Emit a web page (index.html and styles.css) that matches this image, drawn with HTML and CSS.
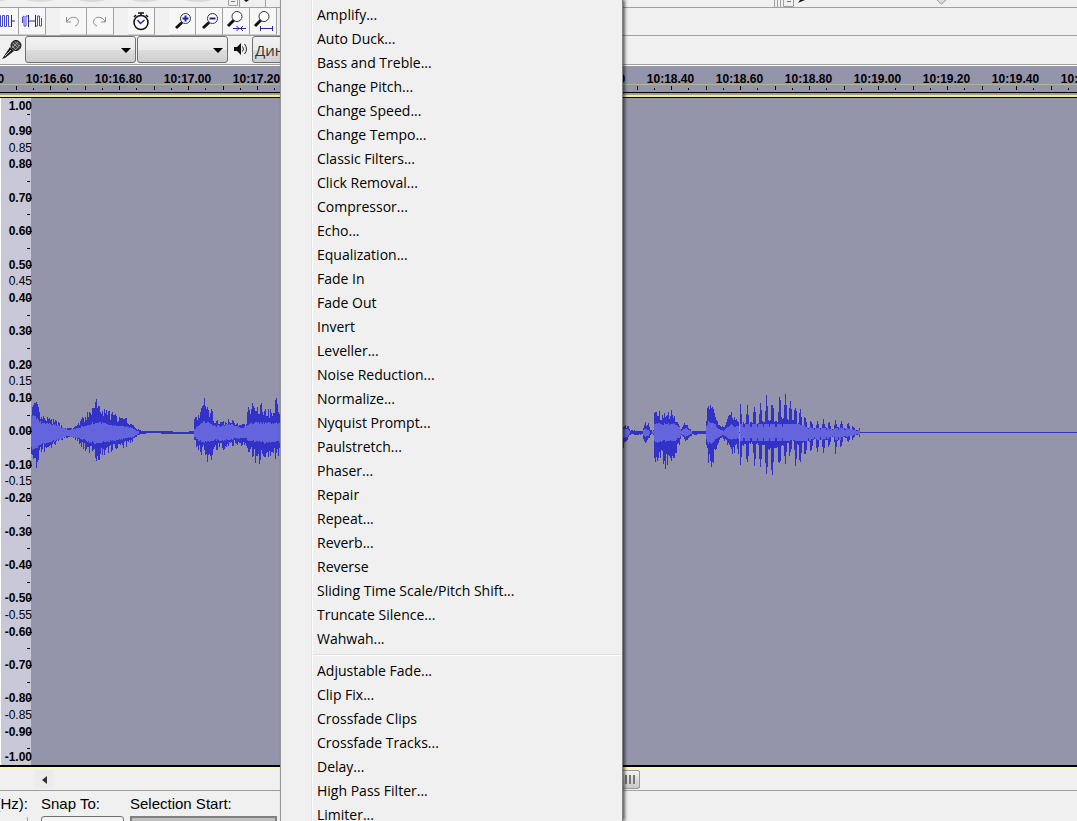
FILE: index.html
```
<!DOCTYPE html>
<html lang="en">
<head>
  <meta charset="UTF-8">
  <meta name="viewport" content="width=device-width, initial-scale=1.0">
  <title>Audacity</title>
  <link rel="stylesheet" href="styles.css">
</head>
<body>
  <div class="app">
    <!-- Transport buttons, mostly scrolled off the top -->
    <div class="toolbar transport">
      <svg class="transport-art" width="1077" height="7" aria-hidden="true">
        <g class="round-shadow">
          <ellipse cx="-8" cy="-5" rx="18" ry="6"/>
          <ellipse cx="40" cy="-5" rx="18" ry="6"/>
          <ellipse cx="92" cy="-5" rx="18" ry="6"/>
          <ellipse cx="145" cy="-5" rx="18" ry="6"/>
          <ellipse cx="198" cy="-5" rx="18" ry="6"/>
        </g>
        <path d="M228.500 0V5.500H237.500V0M774.500 0V7M777.500 0V7M783.500 0V6.500H793.500V0" fill="none" stroke="#a0a0a0"/>
        <path d="M239.500 0V7M265.500 0V7M780.500 0V7" stroke="#a0a0a0"/>
        <path d="M231 1.500H235M787 1.500H791" stroke="#777"/>
        <path d="M244 0H249L246 2ZM798 3L800 0H805L800 2Z" fill="#111"/>
        <path d="M937 0L941.500 4L946 0" fill="#ddd" stroke="#999"/>
      </svg>
    </div>

    <!-- Edit toolbar -->
    <div class="toolbar edit">
      <div class="group first">
        <button class="tool" aria-label="Trim audio">
          <svg width="26" height="26"><path class="navy" d="M0 13H6M19 13H23M19.500 7V19"/><path class="wave" d="M6.500 13V7.500H8.500V18.500H10.500V7.500H12.500V18.500H14.500V7.500H16.500V18.500H18.500"/></svg>
        </button>
        <button class="tool" aria-label="Silence audio">
          <svg width="26" height="26"><path class="navy" d="M10 13H16M9.500 7V19M16.500 7V19"/><path class="wave" d="M3.500 15V9L5 8V18H7V8H9M17 18H18.500V8H20.500V18H22.500V10"/></svg>
        </button>
      </div>
      <div class="group">
        <button class="tool" aria-label="Undo">
          <svg width="26" height="26"><path class="arrow" d="M6.500 9V14H11M7 13.500C9 9 15 8 17.500 11C19.500 14 18 17 15 18"/></svg>
        </button>
        <button class="tool" aria-label="Redo">
          <svg width="26" height="26"><path class="arrow" d="M18.500 9V14H14M18 13.500C16 9 10 8 7.500 11C5.500 14 7 17 10 18"/></svg>
        </button>
      </div>
      <div class="group">
        <button class="tool" aria-label="Sync lock">
          <svg width="26" height="26"><circle cx="13" cy="14.500" r="7" fill="#fff" stroke="#111" stroke-width="1.500"/><path d="M13 5V8M10 5H16M6 9L8 7M18 7L20 9" stroke="#111" stroke-width="1.500"/><path d="M9.500 12L12.500 15.500L16.500 12" fill="none" stroke="#2626a0" stroke-width="1.500"/></svg>
        </button>
      </div>
      <div class="group">
        <button class="tool" aria-label="Zoom in">
          <svg width="26" height="26"><path class="handle" d="M7 20L13 14.500"/><circle class="lens" cx="16.500" cy="10.500" r="5"/><path class="mark" d="M13.500 10.500H19.500M16.500 7.500V13.500"/></svg>
        </button>
        <button class="tool" aria-label="Zoom out">
          <svg width="26" height="26"><path class="handle" d="M7 20L13 14.500"/><circle class="lens" cx="16.500" cy="10.500" r="5"/><path class="mark" d="M13.500 10.500H19.500"/></svg>
        </button>
        <button class="tool" aria-label="Fit selection">
          <svg width="26" height="26"><path class="handle" d="M5 18L11 12"/><circle class="lens" cx="14" cy="8.500" r="5"/><path class="navy" d="M10 20.500H23M13.500 18L16 20.500L13.500 23M20 18L17.500 20.500L20 23"/></svg>
        </button>
        <button class="tool" aria-label="Fit project">
          <svg width="26" height="26"><path class="handle" d="M5 18L11 12"/><circle class="lens" cx="14" cy="8.500" r="5"/><path class="navy" d="M11 20.500H22M10.500 18V23M22.500 18V23"/></svg>
        </button>
      </div>
    </div>

    <!-- Device toolbar -->
    <div class="toolbar device">
      <svg class="mic" width="25" height="26" aria-hidden="true">
        <path d="M2 23L10 11L14 15L5 22Z" fill="#222"/>
        <path d="M5 20L11 14" stroke="#bbb"/>
        <circle cx="16" cy="9.500" r="5" fill="#444" stroke="#111"/>
        <path d="M13 7L18 12M15 5.500L19 10M12 10L16 14M18 6L12 12M20 9L15 14" stroke="#aaa" stroke-width=".8"/>
      </svg>
      <span class="combo host"><select aria-label="Audio host"><option></option></select></span>
      <span class="combo input"><select aria-label="Recording device"><option></option></select></span>
      <svg class="speaker" width="23" height="26" aria-hidden="true">
        <path d="M5 11H8L12 7V19L8 15H5Z" fill="#111"/>
        <path d="M13.500 10.500Q15.500 13 13.500 15.500M15.500 8Q19.500 13 15.500 18" fill="none" stroke="#222"/>
      </svg>
      <span class="combo output"><select aria-label="Playback device"><option>Динамики</option></select></span>
    </div>

    <!-- Timeline -->
    <div class="ruler">
      <div class="times" id="times"></div>
      <svg class="ticks" width="100%" height="7" aria-hidden="true">
        <defs>
          <pattern id="tick" width="69" height="7" x="16" patternUnits="userSpaceOnUse">
            <path d="M.5 1V5M34.500 1V5" stroke="#000"/>
            <path d="M17.500 3V5M51.500 3V5" stroke="#000"/>
          </pattern>
        </defs>
        <rect width="100%" height="7" fill="url(#tick)"/>
      </svg>
    </div>

    <!-- Audio track -->
    <div class="track">
      <div class="scale" id="scale"></div>
      <div class="wave-area">
        <svg class="waveform" height="120" width="100%" aria-hidden="true">
          <path class="zero" d="M0 60.500H4000"/>
          <path id="peaks"/>
          <path id="rms"/>
        </svg>
      </div>
    </div>

    <div class="scrollbar">
      <button class="scroll-left" aria-label="Scroll left"></button>
      <div class="thumb"><i></i><i></i><i></i></div>
    </div>

    <!-- Selection toolbar -->
    <form class="selection">
      <div class="field rate"><label for="rate">Project Rate (Hz):</label><input id="rate"></div>
      <div class="field snap"><label for="snap">Snap To:</label><select id="snap"><option></option></select></div>
      <div class="field start"><label for="start">Selection Start:</label><input id="start"></div>
    </form>
  </div>

  <!-- Effect menu -->
  <div class="menu" role="menu">
    <button role="menuitem">Amplify...</button>
    <button role="menuitem">Auto Duck...</button>
    <button role="menuitem">Bass and Treble...</button>
    <button role="menuitem">Change Pitch...</button>
    <button role="menuitem">Change Speed...</button>
    <button role="menuitem">Change Tempo...</button>
    <button role="menuitem">Classic Filters...</button>
    <button role="menuitem">Click Removal...</button>
    <button role="menuitem">Compressor...</button>
    <button role="menuitem">Echo...</button>
    <button role="menuitem">Equalization...</button>
    <button role="menuitem">Fade In</button>
    <button role="menuitem">Fade Out</button>
    <button role="menuitem">Invert</button>
    <button role="menuitem">Leveller...</button>
    <button role="menuitem">Noise Reduction...</button>
    <button role="menuitem">Normalize...</button>
    <button role="menuitem">Nyquist Prompt...</button>
    <button role="menuitem">Paulstretch...</button>
    <button role="menuitem">Phaser...</button>
    <button role="menuitem">Repair</button>
    <button role="menuitem">Repeat...</button>
    <button role="menuitem">Reverb...</button>
    <button role="menuitem">Reverse</button>
    <button role="menuitem">Sliding Time Scale/Pitch Shift...</button>
    <button role="menuitem">Truncate Silence...</button>
    <button role="menuitem">Wahwah...</button>
    <hr>
    <button role="menuitem">Adjustable Fade...</button>
    <button role="menuitem">Clip Fix...</button>
    <button role="menuitem">Crossfade Clips</button>
    <button role="menuitem">Crossfade Tracks...</button>
    <button role="menuitem">Delay...</button>
    <button role="menuitem">High Pass Filter...</button>
    <button role="menuitem">Limiter...</button>
  </div>

  <script src="script.js"></script>
</body>
</html>
```
FILE: styles.css
```
* {
  box-sizing: border-box;
}

body {
  margin: 0;
  position: relative;
  overflow: hidden;
  background: #f0f0f0;
  color: #000;
  font-family: "Liberation Sans", Arial, sans-serif;
}

button,
select,
input {
  margin: 0;
  padding: 0;
  border: 0;
  background: none;
  color: inherit;
  font: inherit;
}

svg {
  display: block;
}

.app {
  display: flex;
  flex-direction: column;
  height: 100vh;
}

/* Toolbars */
.toolbar {
  display: flex;
  flex: none;
  overflow: hidden;
  border-bottom: 1px solid #a0a0a0;
}

.transport {
  height: 8px;
}

.transport-art {
  flex: none;
}

.round-shadow {
  fill: #b4b4b4;
  stroke: #d8d8d8;
  stroke-width: 2;
}

.edit {
  height: 28px;
}

.group {
  display: flex;
  margin-right: 14px;
}

.group.first {
  margin-left: -8px;
}

.tool {
  width: 27px;
  height: 27px;
  background: #f7f7f7;
  border-right: 1px solid #a0a0a0;
  border-bottom: 1px solid #d0d0d0;
}

.tool path {
  fill: none;
}

.navy {
  stroke: #26268c;
}

.wave {
  stroke: #4646c8;
}

.arrow {
  stroke: #8c8c8c;
}

.handle {
  stroke: #111;
  stroke-width: 3;
}

.lens {
  fill: #fff;
  stroke: #333;
}

.mark {
  stroke: #1c1cb4;
  stroke-width: 2;
}

.device {
  height: 29px;
}

.mic,
.speaker {
  flex: none;
}

.combo {
  position: relative;
  flex: none;
  height: 27px;
  margin-right: 1px;
}

.combo select {
  appearance: none;
  width: 100%;
  height: 100%;
  padding: 0 2px;
  border: 1px solid #707070;
  border-radius: 3px;
  background: linear-gradient(#f2f2f2, #ebebeb 50%, #dddddd 50%, #cfcfcf);
  color: #333;
  font-family: "Open Sans", sans-serif;
  font-size: 15px;
}

.combo::after {
  content: "";
  position: absolute;
  right: 5px;
  top: 12px;
  border: 5px solid transparent;
  border-top-color: #000;
  border-bottom: 0;
}

.host {
  width: 111px;
}

.input {
  width: 91px;
}

.output {
  width: 240px;
}

/* Timeline */
.ruler {
  display: flex;
  flex-direction: column;
  flex: none;
  overflow: hidden;
  height: 32px;
  border-top: 1px solid #fff;
  border-bottom: 4px solid #a0a08c;
  background: #9494aa;
}

.times {
  display: flex;
  height: 19px;
  margin-left: -54px;
  padding-top: 5px;
  border-bottom: 1px solid #b4b4a0;
  font-size: 12px;
  font-weight: bold;
  line-height: 16px;
}

.times span {
  flex: none;
  width: 69px;
  text-align: center;
}

.ticks {
  border-bottom: 1px solid #000;
  box-sizing: content-box;
}

/* Track */
.track {
  display: flex;
  flex: 1;
  min-height: 0;
  border-top: 1px solid #000;
  border-bottom: 2px solid #000;
  box-shadow: 0 -2px #f0f08c, 0 2px #fafab4;
  position: relative;
}

.scale {
  position: relative;
  z-index: 1;
  display: flex;
  flex-direction: column;
  flex: none;
  width: 31px;
  border-left: 1px solid #fff;
  background: #c8c8d8;
  font-size: 12px;
}

.mark-row {
  display: flex;
  flex: 1;
  position: relative;
  align-items: center;
  justify-content: flex-end;
  min-height: 0;
  margin-right: -1px;
  line-height: 16px;
}

.mark-row.major {
  font-weight: bold;
}

.mark-row.major::after,
.mark-row.minor::after {
  content: "";
  position: absolute;
  right: 0;
  top: 50%;
  width: 4px;
  height: 1px;
  background: #000;
}

.mark-row.minor::after {
  right: 2px;
  width: 3px;
}

.mark-row.end {
  flex: 0 0 8px;
  font-weight: bold;
}

.mark-row.top {
  align-items: flex-start;
}

.mark-row.bottom {
  align-items: flex-end;
}

.wave-area {
  display: flex;
  flex: 1;
  align-items: center;
  min-width: 0;
  overflow: hidden;
  background: #9494aa;
}

.waveform {
  shape-rendering: crispEdges;
}

.zero {
  stroke: #3232c8;
}

#peaks {
  stroke: #3232c8;
}

#rms {
  stroke: #6464dc;
}

/* Scrollbar */
.scrollbar {
  display: flex;
  flex: none;
  height: 24px;
  padding: 3px 0 1px 35px;
  border-bottom: 1px solid #a0a0a0;
}

.scroll-left {
  width: 18px;
  background: #ececec;
}

.scroll-left::before {
  content: "";
  display: block;
  width: 0;
  margin-left: 7px;
  border: 4px solid transparent;
  border-right: 5px solid #333;
  border-left: 0;
}

.thumb {
  display: flex;
  align-items: center;
  justify-content: flex-end;
  gap: 2px;
  width: 304px;
  margin-left: 283px;
  padding-right: 4px;
  border: 1px solid #999;
  border-radius: 2px;
  background: linear-gradient(#f4f4f4, #dcdcdc 50%, #c8c8c8);
}

.thumb i {
  width: 2px;
  height: 9px;
  background: #777;
}

/* Selection toolbar */
.selection {
  display: flex;
  flex: none;
  height: 30px;
  overflow: hidden;
  font-size: 15px;
  line-height: 18px;
}

.field {
  display: flex;
  flex: none;
  flex-direction: column;
  gap: 3px;
  padding-top: 4px;
  white-space: nowrap;
}

.field input,
.field select {
  flex: none;
  height: 24px;
  border: 1px solid #707070;
  border-radius: 3px;
  background: #f4f4f4;
}

.rate {
  align-items: flex-end;
  width: 28px;
}

.field.rate input {
  border-color: #f0f0f0 #a0a0a0 #f0f0f0 #f0f0f0;
  background: #f0f0f0;
}

.snap {
  width: 83px;
  margin-left: 13px;
}

.start {
  width: 147px;
  margin-left: 6px;
}

.field.start input {
  border: 2px solid #808080;
  border-radius: 0;
  background: #c0c0c0;
}

/* Effect menu, open over the window */
.menu {
  position: absolute;
  top: 0;
  left: 280px;
  z-index: 2;
  display: flex;
  flex-direction: column;
  width: 343px;
  height: 100vh;
  padding: 3px 2px 0 0;
  overflow: hidden;
  border-left: 1px solid #979797;
  border-right: 1px solid #808080;
  background: linear-gradient(90deg, #f0f0f0 30px, #e2e3e3 30px, #e2e3e3 31px, #fff 31px, #fff 32px, #f0f0f0 32px);
  box-shadow: 2px 0 3px rgba(0, 0, 0, 0.6);
  font-family: "Open Sans", "Noto Sans", sans-serif;
  font-size: 14px;
}

.menu button {
  flex: none;
  height: 24px;
  padding-left: 36px;
  text-align: left;
  line-height: 24px;
}

.menu hr {
  flex: none;
  width: auto;
  height: 2px;
  margin: 3px 0 3px 32px;
  border: 0;
  border-top: 1px solid #e0e0e0;
  border-bottom: 1px solid #fff;
}
```
FILE: script.js
```
// Timeline labels, one every 0.20 s
const times = document.getElementById("times");
for (let t = 1640; t < 2400; t += 20) {
  const span = document.createElement("span");
  span.textContent = `10:${(t / 100).toFixed(2)}`;
  times.appendChild(span);
}

// Vertical scale from 1.00 to -1.00, one row every 0.05
const scale = document.getElementById("scale");
const light = [85, 45, 15, -15, -55, -85];
for (let v = 100; v >= -100; v -= 5) {
  const row = document.createElement("div");
  row.className = "mark-row";
  if (Math.abs(v) === 100) {
    row.classList.add("end", v > 0 ? "top" : "bottom");
  } else if (v % 10 === 0) {
    row.classList.add("major");
  } else if (!light.includes(v)) {
    row.classList.add("minor");
  }
  if (v % 10 === 0 || light.includes(v)) {
    row.textContent = (v / 100).toFixed(2);
  }
  scale.appendChild(row);
}

// Envelope points: x, peak up, peak down, rms up, rms down
const clips = [
  [
    [0, 26, 22, 18, 16], [4, 34, 44, 16, 16], [7, 26, 28, 13, 14], [9, 17, 20, 10, 12],
    [14, 16, 20, 9, 11], [20, 14, 16, 8, 9], [27, 11, 10, 7, 7], [32, 6, 6, 4, 4],
    [36, 4, 5, 2, 3], [42, 5, 5, 3, 4], [47, 10, 11, 4, 5], [52, 16, 17, 6, 7],
    [58, 22, 20, 8, 9], [62, 32, 25, 9, 10], [66, 34, 32, 9, 10], [70, 25, 26, 9, 9],
    [76, 23, 22, 8, 9], [82, 20, 19, 7, 8], [88, 16, 17, 6, 7], [96, 14, 14, 5, 5],
    [101, 8, 9, 4, 4], [106, 4, 4, 1, 1], [110, 1, 1, 0, 0], [122, 1, 0, 0, 0],
    [136, 1, 1, 0, 0], [150, 0, 1, 0, 0], [162, 1, 1, 0, 0], [163, 14, 9, 3, 4],
    [168, 20, 22, 7, 8], [172, 36, 22, 10, 9], [176, 28, 31, 11, 9], [180, 24, 28, 8, 8],
    [184, 13, 20, 6, 7], [190, 11, 17, 6, 8], [197, 13, 17, 8, 7], [204, 12, 13, 7, 6],
    [209, 7, 13, 4, 5], [214, 9, 14, 5, 5], [218, 31, 22, 9, 8], [226, 34, 33, 10, 9],
    [232, 27, 29, 9, 10], [240, 26, 24, 9, 9], [246, 39, 29, 9, 9], [252, 22, 22, 9, 9]
  ],
  [
    [592, 6, 19, 3, 5], [596, 8, 8, 3, 4], [599, 2, 2, 0, 0], [611, 1, 2, 0, 0],
    [613, 11, 12, 3, 4], [617, 9, 9, 2, 3], [619, 2, 2, 0, 0], [622, 2, 2, 1, 1],
    [623, 22, 36, 8, 8], [626, 25, 39, 9, 9], [631, 21, 22, 8, 8], [633, 23, 41, 8, 8],
    [638, 24, 29, 8, 8], [642, 20, 29, 8, 8], [645, 16, 23, 7, 7], [648, 8, 14, 5, 5],
    [650, 3, 3, 1, 1], [654, 11, 10, 4, 4], [658, 4, 6, 2, 2], [661, 1, 2, 0, 0],
    [674, 1, 1, 0, 0], [675, 18, 16, 6, 6], [677, 31, 31, 10, 10], [681, 30, 35, 10, 10],
    [684, 16, 20, 7, 7], [688, 7, 9, 3, 4], [692, 6, 6, 1, 2], [696, 14, 13, 5, 5],
    [700, 24, 24, 7, 6], [704, 15, 20, 6, 6], [708, 18, 22, 6, 6]
  ]
];

// Separate bursts of the last phrase: x, up, down
const bursts = [
  [709, 28, 36], [716, 28, 33], [723, 29, 35], [729, 33, 40], [735, 37, 50], [741, 33, 44],
  [748, 43, 38], [754, 38, 31], [759, 37, 24], [764, 29, 39], [769, 24, 31], [774, 15, 25],
  [780, 12, 20], [786, 13, 22], [792, 13, 21], [798, 10, 14], [804, 13, 22], [810, 12, 14],
  [817, 9, 10], [822, 6, 6], [829, 1, 1]
];

const middle = 60.5;
let seed = 7;
function noise() {
  seed = (seed * 16807) % 2147483647;
  return seed / 2147483647;
}

function column(x, up, down) {
  return `M${x + 0.5} ${middle - Math.round(up) - 0.5}V${middle + Math.round(down) + 0.5}`;
}

let peaks = "";
let rms = "";

clips.forEach(points => {
  for (let i = 0; i < points.length - 1; i++) {
    const a = points[i];
    const b = points[i + 1];
    for (let x = a[0]; x < b[0]; x++) {
      const k = (x - a[0]) / (b[0] - a[0]);
      const v = a.map((n, j) => n + (b[j] - n) * k);
      peaks += column(x, v[1] * (0.55 + 0.45 * noise()), v[2] * (0.55 + 0.45 * noise()));
      if (v[3] > 0.5) {
        rms += column(x, v[3] * (0.85 + 0.25 * noise()), v[4] * (0.85 + 0.25 * noise()));
      }
    }
  }
});

for (let i = 0; i < bursts.length - 1; i++) {
  const [start, up, down] = bursts[i];
  const end = bursts[i + 1][0];
  for (let x = start; x < end; x++) {
    const d = Math.min(x - start, end - x);
    const k = d === 0 ? 1 : d === 1 ? 0.75 : 0.35;
    const body = d > 2 ? 0.6 : 1;
    peaks += column(x, up * k * (0.8 + 0.2 * noise()), down * k * (0.8 + 0.2 * noise()));
    rms += column(x, Math.min(up * 0.3, 8) * body, Math.min(down * 0.3, 8) * body);
  }
}

document.getElementById("peaks").setAttribute("d", peaks);
document.getElementById("rms").setAttribute("d", rms);
```
